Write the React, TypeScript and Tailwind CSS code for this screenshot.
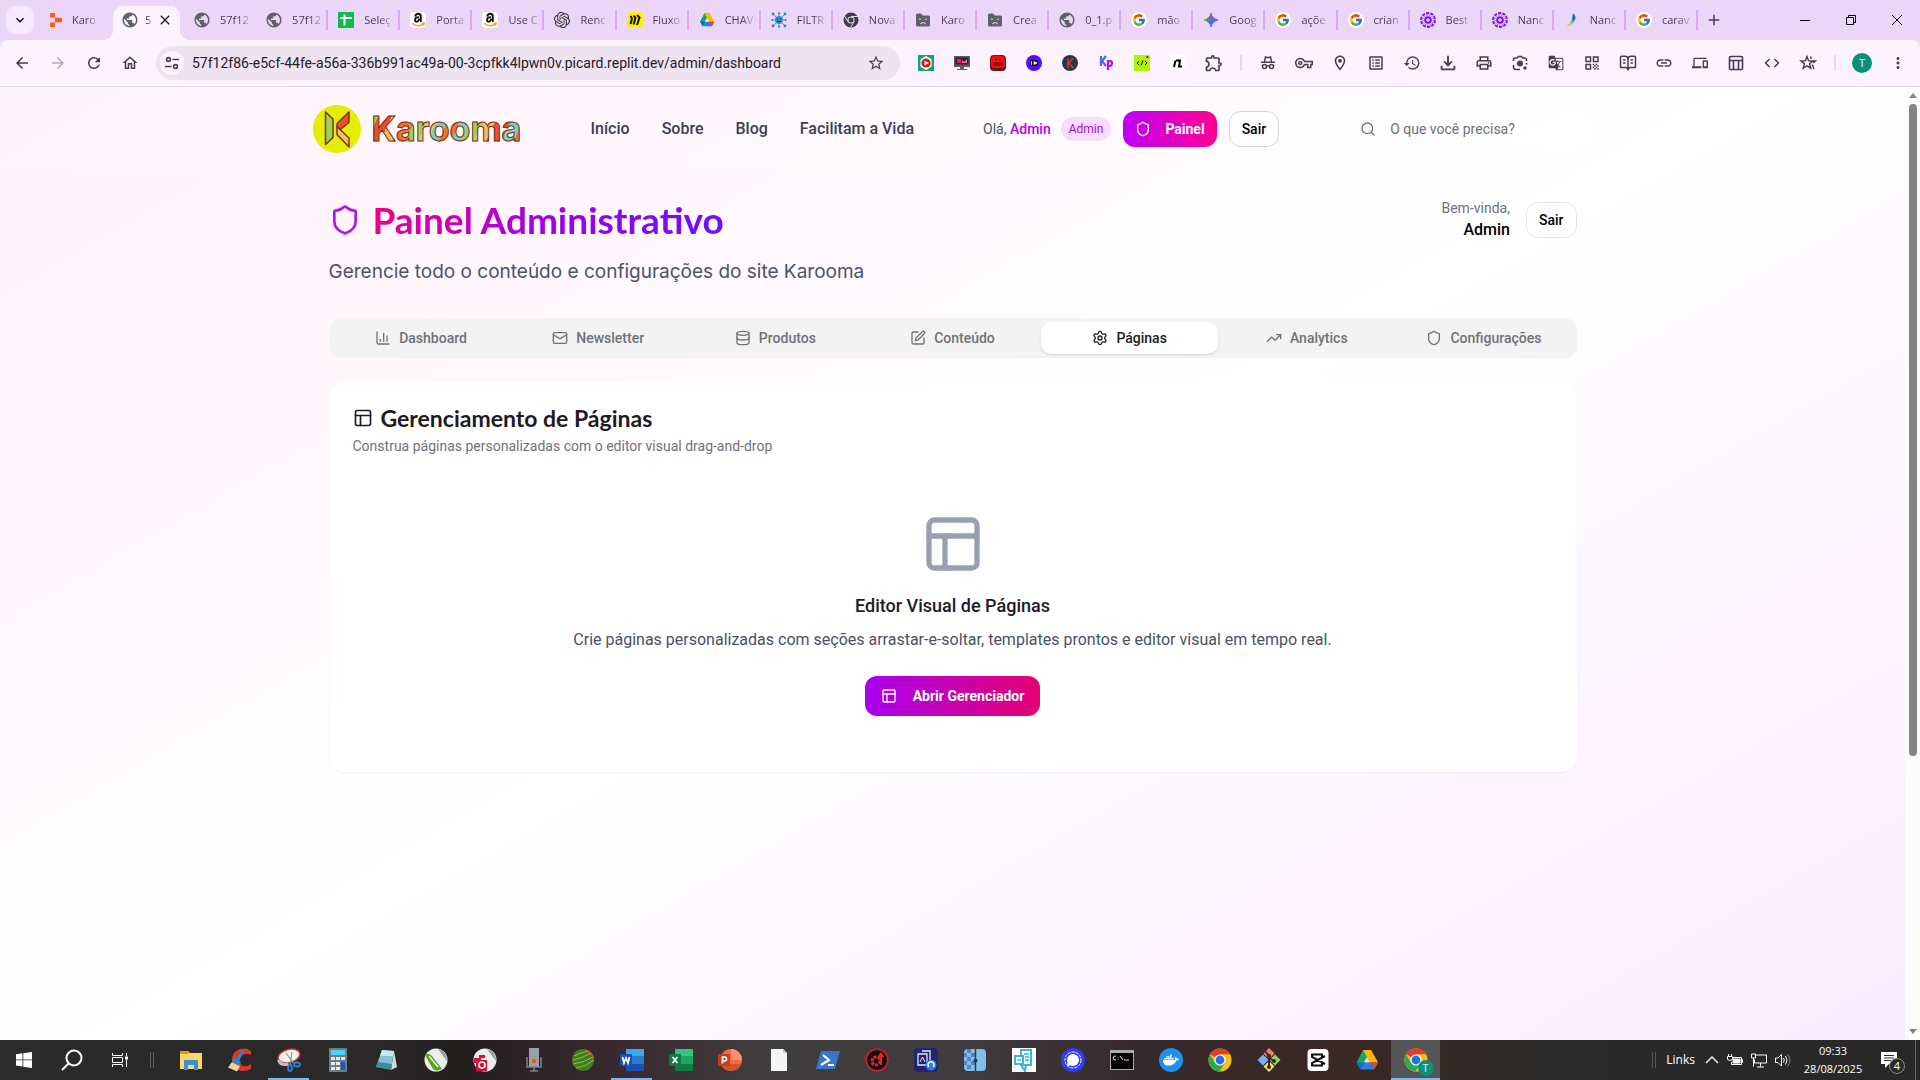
import React from 'react';
import type { ReactNode } from 'react';
import { ChartColumn, Mail, Database, SquarePen, Settings, TrendingUp, Shield, PanelsTopLeft, Search, BookOpenText } from 'lucide-react';
import {
  MdArrowBack, MdArrowForward, MdRefresh, MdOutlineHome, MdPublic, MdStarOutline, MdOutlineExtension,
  MdOutlineVpnKey, MdOutlineLocationOn, MdOutlineListAlt, MdHistory, MdOutlineFileDownload, MdOutlinePrint,
  MdGTranslate, MdQrCode, MdLink, MdDevices, MdCode, MdMoreVert, MdAdd,
  MdClose, MdKeyboardArrowDown,
} from 'react-icons/md';
import { FcGoogle } from 'react-icons/fc';
import { FaDocker } from 'react-icons/fa';
import { SiOpenai } from 'react-icons/si';

/* ---------- Favicons ---------- */

const Globe = () => <MdPublic className="size-[18px] text-[#5f6368]" />;

const Replit = () => (
  <svg viewBox="0 0 16 16" className="size-4 shrink-0">
    <path d="M2 1h5v4.600H3Q2 5.600 2 4.600ZM7 5.700h6q1 0 1 1v2.600q0 1-1 1H7ZM2 10.400h5V15H3q-1 0-1-1Z" fill="#ff5a12" />
  </svg>
);

const Sheets = () => (
  <svg viewBox="0 0 16 16" className="size-4">
    <rect width="16" height="16" rx="1" fill="#0cba52" />
    <path d="M6.500 2.500v11M2 6h12" stroke="#fff" strokeWidth="2" />
  </svg>
);

const Amazon = () => (
  <span className="flex size-4 items-center justify-center rounded-sm bg-white">
    <svg viewBox="0 0 16 16" className="size-4">
      <path d="M5.200 4.500Q5.600 1.800 8.200 1.800q2.600 0 2.600 2.600v3.800q0 .8.700 1.500M9 5.300Q5 5.300 5 7.700q0 1.900 1.800 1.900Q9 9.600 9 6.800" fill="none" stroke="#111" strokeWidth="1.900" />
      <path d="M2 11.500q6 4 11 .6M11.500 11.300l2.600-.2-.5 2.600" fill="none" stroke="#ff9f1a" strokeWidth="1.500" />
    </svg>
  </span>
);

const OpenAi = () => <SiOpenai className="size-4 text-[#333]" />;

const Miro = () => (
  <svg viewBox="0 0 16 16" className="size-4">
    <rect width="16" height="16" rx="4" fill="#fff000" />
    <path d="M3.500 4L5 6.500 3.500 12M6.500 3.500L8.500 6 6.500 12.500M10 3l2.500 2.500L10 13" stroke="#111" strokeWidth="2" fill="none" />
  </svg>
);

const Drive = ({ className = 'size-4' }: { className?: string }) => (
  <svg viewBox="0 0 24 24" className={className}>
    <path d="M8 2h8l-4 7-6.500 12.500L1.500 14.500Z" fill="#11a861" />
    <path d="M8 2h8l7 12.500h-8Z" fill="#ffba00" />
    <path d="M5.500 21.500l4-7H23l-4 7Z" fill="#2b7de9" />
    <path d="M1.500 14.500l4 7 4-7Z" fill="#1967d2" />
    <path d="M15.500 14.500H23l-3.500 6.500Z" fill="#ea4335" />
    <path d="M12 9l3.200 5.500H8.800Z" fill="#efe6f2" />
  </svg>
);

const Network = () => (
  <svg viewBox="0 0 16 16" className="size-4">
    <path d="M2 2l4 4M14 2l-4 4M2 14l4-4M14 14l-4-4M8 1v4M8 11v4M1 8h4M11 8h4" stroke="#4b94c7" />
    <circle cx="8" cy="8" r="4" fill="#2f8fd0" />
    <g fill="#3b7fb0">
      <circle cx="2" cy="2" r="1.400" /><circle cx="14" cy="2" r="1.400" /><circle cx="2" cy="14" r="1.400" /><circle cx="14" cy="14" r="1.400" />
      <circle cx="1.300" cy="8" r="1" /><circle cx="14.700" cy="8" r="1" /><circle cx="8" cy="1.200" r="1" /><circle cx="8" cy="14.800" r="1" />
    </g>
    <path d="M6 7h1M9 7h1M6 9.500h4" stroke="#083a5c" />
  </svg>
);

const ChromeGray = () => (
  <svg viewBox="0 0 16 16" className="size-4">
    <circle cx="8" cy="8" r="7.500" fill="#3c3f43" />
    <circle cx="8" cy="8" r="3.600" fill="#ecd6f8" />
    <circle cx="8" cy="8" r="2.500" fill="#3c3f43" />
    <path d="M8 4.500h7M5 9.800L1.600 4M11 9.800L7.500 15.500" stroke="#ecd6f8" />
  </svg>
);

const SadFolder = () => (
  <svg viewBox="0 0 16 16" className="size-4">
    <path d="M1 3q0-1.500 1.500-1.500H6L8 3.500h5.500Q15 3.500 15 5v8q0 1.500-1.500 1.500h-11Q1 14.500 1 13Z" fill="#5f6368" />
    <path d="M5 6.500v1.500M11 6.500v1.500M5.500 12q2.500-3 5 0" stroke="#ecd6f8" strokeWidth="1.200" fill="none" />
  </svg>
);

const Google = () => (
  <span className="flex size-4 items-center justify-center rounded-full bg-white"><FcGoogle className="size-3.5" /></span>
);

const Gemini = () => (
  <svg viewBox="0 0 16 16" className="size-4">
    <defs>
      <linearGradient id="gem" x1="0" y1="0.2" x2="1" y2="0.7">
        <stop offset="0" stopColor="#f2b705" /><stop offset="0.3" stopColor="#2fa866" /><stop offset="0.55" stopColor="#4c6df5" /><stop offset="1" stopColor="#6a5cf0" />
      </linearGradient>
    </defs>
    <path d="M8 1Q9 6.500 15 8 9 9.500 8 15 7 9.500 1 8 7 6.500 8 1Z" fill="url(#gem)" stroke="url(#gem)" />
    <path d="M8 .5Q8.500 4 9.500 5.500L8 6.500 6.500 5.500Q7.500 4 8 .5Z" fill="#ea4335" />
  </svg>
);

const PurpleGear = () => (
  <svg viewBox="0 0 16 16" className="size-4" fill="none" stroke="#7a12e8">
    <circle cx="8" cy="8" r="7" strokeWidth="1.800" strokeDasharray="3.200 1.200" />
    <circle cx="8" cy="8" r="2.800" strokeWidth="2" />
    <circle cx="8" cy="8" r="5.300" strokeWidth=".8" strokeDasharray="1.500 1" />
  </svg>
);

const Nano = () => (
  <svg viewBox="0 0 16 16" className="size-4">
    <path d="M9 1q5 5 0 10-3 3-6 3.500Q8 10 8 5.500Q8 3 9 1Z" fill="#27b9c9" />
    <path d="M9.500 1.500q3 3.500 1 7L8.500 8Q9.500 4 9.500 1.500Z" fill="#4f46c8" />
    <path d="M7 10l2.500 1Q6 14.500 3 14.500Z" fill="#c5d92d" />
  </svg>
);

/* ---------- Browser chrome ---------- */

const browserTabs: { icon: ReactNode; title: string }[] = [
  { icon: <Globe />, title: '57f12' },
  { icon: <Globe />, title: '57f12' },
  { icon: <Sheets />, title: 'Seleç' },
  { icon: <Amazon />, title: 'Porta' },
  { icon: <Amazon />, title: 'Use C' },
  { icon: <OpenAi />, title: 'Renc' },
  { icon: <Miro />, title: 'Fluxo' },
  { icon: <Drive />, title: 'CHAV' },
  { icon: <Network />, title: 'FILTR' },
  { icon: <ChromeGray />, title: 'Nova' },
  { icon: <SadFolder />, title: 'Karo' },
  { icon: <SadFolder />, title: 'Crea' },
  { icon: <Globe />, title: '0_1.p' },
  { icon: <Google />, title: 'mão' },
  { icon: <Gemini />, title: 'Goog' },
  { icon: <Google />, title: 'açõe' },
  { icon: <Google />, title: 'crian' },
  { icon: <PurpleGear />, title: 'Best' },
  { icon: <PurpleGear />, title: 'Nanc' },
  { icon: <Nano />, title: 'Nanc' },
  { icon: <Google />, title: 'carav' },
];

const fade = 'whitespace-nowrap text-[11px] [mask-image:linear-gradient(to_right,#000_60%,rgba(0,0,0,0.25))]';

function TabStrip() {
  return (
    <div className="flex h-10 items-stretch bg-[#ecd6f8] text-xs text-[#4b3a55]">
      <div className="flex w-[46px] items-center pl-1.5">
        <button aria-label="Pesquisar guias" className="flex h-7 w-7 items-center justify-center rounded-[10px] bg-[#f8e8ff] text-black">
          <MdKeyboardArrowDown className="size-4" />
        </button>
      </div>
      <button className="flex w-[67px] items-center gap-2 pl-0.5 text-left">
        <Replit />
        <span className={fade}>Karo</span>
      </button>
      <div className="relative mt-1.5 flex w-[67px] items-center rounded-t-[10px] bg-[#fdf3ff] pb-1.5 pl-2">
        <span className="absolute bottom-0 -left-2.5 size-2.5 bg-[radial-gradient(circle_at_0_0,transparent_10px,#fdf3ff_10px)]" />
        <span className="absolute -right-2.5 bottom-0 size-2.5 bg-[radial-gradient(circle_at_100%_0,transparent_10px,#fdf3ff_10px)]" />
        <Globe />
        <span className={`ml-1.5 ${fade}`}>5</span>
        <button aria-label="Fechar guia" className="ml-1.5 text-[#1f1a24]"><MdClose className="size-4" /></button>
      </div>
      <div className="flex max-w-[1518px] flex-1 pl-1">
        {browserTabs.map((t, i) => (
          <button key={i} className="flex min-w-0 flex-1 items-center pl-2 text-left">
            <span className="flex w-5 justify-center">{t.icon}</span>
            <span className={`ml-2 ${fade}`}>{t.title}</span>
            {i > 0 && <span className="ml-auto h-5 w-0.5 bg-[#dba6fb]" />}
          </button>
        ))}
      </div>
      <button aria-label="Nova guia" className="flex w-8 items-center justify-center"><MdAdd className="size-[18px]" /></button>
      <div className="ml-auto flex text-black">
        <button aria-label="Minimizar" className="flex w-[46px] items-center justify-center"><span className="h-px w-2.5 bg-black" /></button>
        <button aria-label="Restaurar" className="flex w-[46px] items-center justify-center">
          <svg viewBox="0 0 10 10" className="size-2.5" fill="none" stroke="currentColor"><path d="M.5 2.500h7v7h-7zM2.500 2.500v-2h7v7h-2" /></svg>
        </button>
        <button aria-label="Fechar" className="flex w-[46px] items-center justify-center">
          <svg viewBox="0 0 10 10" className="size-2.5" stroke="currentColor"><path d="M0 0l10 10M10 0L0 10" /></svg>
        </button>
      </div>
    </div>
  );
}

const ExtRecord = () => (
  <svg viewBox="0 0 16 16" className="size-4"><rect width="16" height="16" fill="#12a37c" /><path d="M8 1l5.500 3.200v7.600L8 15l-5.500-3.200V4.200Z" fill="#fff" /><circle cx="8" cy="8" r="4.600" fill="#e5131d" /><path d="M6.500 5.500v5L11 8Z" fill="#fff" /></svg>
);
const ExtMonitor = () => (
  <svg viewBox="0 0 16 16" className="size-4"><rect y="1" width="16" height="11" fill="#5d5767" /><rect x="1.500" y="2.500" width="13" height="7" fill="#2b2333" /><path d="M3 4h4v4H3z" fill="#e61e62" /><path d="M8 8V5l2 2 3-3v4Z" fill="#f16b97" /><path d="M6 12h4v2h3v1H3v-1h3z" fill="#5d6170" /></svg>
);
const ExtRed = () => (
  <svg viewBox="0 0 16 16" className="size-4"><rect width="16" height="16" rx="4" fill="#6d1714" /><rect x="1" y="1" width="14" height="12" rx="3" fill="#f20f0f" /><path d="M5 4.500h2M9 4.500h2M3 8h10M3 10h10" stroke="#5a0808" /></svg>
);
const ExtPurple = () => (
  <svg viewBox="0 0 16 16" className="size-4"><circle cx="8" cy="8" r="8" fill="#5a0bff" /><rect x="4" y="5" width="8" height="6" rx="1" fill="#0b0620" /><path d="M5.500 6v4M8 6.500l3 1.500-3 1.500Z" stroke="#fff" fill="#fff" strokeWidth=".8" /></svg>
);
const ExtK = () => (
  <svg viewBox="0 0 16 16" className="size-4"><circle cx="8" cy="8" r="8" fill="#2c3446" /><path d="M6 3v10M11 3L7 8l4 5" stroke="#e03535" strokeWidth="1.500" fill="none" /></svg>
);
const ExtKp = () => (
  <svg viewBox="0 0 16 16" className="size-4" fill="none" strokeWidth="2.200"><path d="M3 1v10M8 1L4 6l4 5" stroke="#3d6bf2" /><path d="M10 5v10M10 6.500q4.500-1.500 4 2t-4 2" stroke="#b414e8" /></svg>
);
const ExtCode = () => (
  <svg viewBox="0 0 16 16" className="size-4"><rect width="16" height="16" fill="#aef500" /><path d="M5 6L3 8l2 2M11 6l2 2-2 2M9 5.500l-2 5" stroke="#111" fill="none" /><circle cx="13.500" cy="2" r="1" fill="#111" /></svg>
);
const ExtN = () => (
  <svg viewBox="0 0 16 16" className="size-4"><rect width="16" height="16" rx="3" fill="#fff" /><path d="M4 12l1.500-6.500M6 5.500h4L9 11.500h3" stroke="#000" strokeWidth="2" fill="none" /></svg>
);
const Incognito = () => (
  <svg viewBox="0 0 18 18" className="size-[18px]" fill="none" stroke="currentColor" strokeWidth="1.500"><path d="M5.500 7.500L6.500 3l2.500.8 2.500-.8 1 4.500M2 8.200h14" /><circle cx="5.500" cy="12.500" r="2" /><circle cx="12.500" cy="12.500" r="2" /><path d="M7.500 12.200q1.500-1 3 0" /></svg>
);
const Lens = () => (
  <svg viewBox="0 0 18 18" className="size-[18px]" fill="none" stroke="currentColor" strokeWidth="1.600"><path d="M2.500 7V6q0-2 2-2h1.700L7.500 2.500h3L11.800 4h1.700q2 0 2 2v1M2.500 11v2q0 2.500 2.500 2.500h4M15.500 9v1.500" /><circle cx="9" cy="9.500" r="2.200" fill="currentColor" /><circle cx="14" cy="14" r="1" fill="currentColor" /></svg>
);
const StarSpark = () => (
  <svg viewBox="0 0 18 18" className="size-[18px]" fill="none" stroke="currentColor" strokeWidth="1.400"><path d="M8 2.500l1.600 4.200 4.500.2-3.500 2.900 1.200 4.400L8 11.800l-3.800 2.400 1.200-4.400L1.900 6.900l4.500-.2ZM11.500 2.500l.9 2.500M13.300 10.500l1.700 4.500M14 6.900h2.500l-2.300 2" /></svg>
);
const SideLayout = () => (
  <svg viewBox="0 0 18 18" className="size-[18px]" fill="none" stroke="currentColor" strokeWidth="1.600"><rect x="2.500" y="2.500" width="13" height="13" rx="1" /><path d="M2.500 6.500h13M6.500 6.500v9M11.500 6.500v9" /></svg>
);
const Tune = () => (
  <svg viewBox="0 0 16 16" className="size-4" fill="none" stroke="currentColor" strokeWidth="1.600"><circle cx="4.500" cy="4.500" r="1.900" /><path d="M8.500 4.500H15M1 11.500h6.500" /><circle cx="11.500" cy="11.500" r="1.900" /></svg>
);

const mono = 'size-[18px]';
const extensions: [string, ReactNode][] = [
  ['Gravador', <ExtRecord />], ['Monitor', <ExtMonitor />], ['Vídeo', <ExtRed />], ['IQ', <ExtPurple />], ['K', <ExtK />],
  ['Kp', <ExtKp />], ['Código', <ExtCode />], ['Notas', <ExtN />], ['Extensões', <MdOutlineExtension className="size-5" />],
];
const tools: [string, ReactNode][] = [
  ['Anônima', <Incognito />], ['Senhas', <MdOutlineVpnKey className={mono} />], ['Endereços', <MdOutlineLocationOn className={mono} />],
  ['Lista', <MdOutlineListAlt className={mono} />], ['Histórico', <MdHistory className={mono} />], ['Downloads', <MdOutlineFileDownload className="size-[22px]" />],
  ['Imprimir', <MdOutlinePrint className={mono} />], ['Lens', <Lens />], ['Traduzir', <MdGTranslate className="size-4" />],
  ['QR Code', <MdQrCode className={mono} />], ['Leitura', <BookOpenText className={mono} />], ['Copiar link', <MdLink className={mono} />],
  ['Dispositivos', <MdDevices className="size-4" />], ['Painel lateral', <SideLayout />], ['Ferramentas', <MdCode className={mono} />],
  ['Favoritos', <StarSpark />],
];

const IconButton = ({ label, children }: { label: string; children: ReactNode }) => (
  <button aria-label={label} className="flex h-8 w-9 shrink-0 items-center justify-center">{children}</button>
);

function Toolbar() {
  return (
    <div className="bg-[#ecd6f8]">
      <div className="flex h-[47px] items-center rounded-t-lg border-b border-[#e8d8ee] bg-[#fdf3ff] pl-1 text-[#4a3a52]">
        <IconButton label="Voltar"><MdArrowBack className={mono} /></IconButton>
        <span className="flex text-[#b5a8ba]"><IconButton label="Avançar"><MdArrowForward className={mono} /></IconButton></span>
        <IconButton label="Recarregar"><MdRefresh className={mono} /></IconButton>
        <IconButton label="Página inicial"><MdOutlineHome className={mono} /></IconButton>
        <div className="ml-2 flex h-[34px] min-w-0 flex-1 items-center rounded-full bg-[#eee3f0] pr-2 pl-1">
          <button aria-label="Informações do site" className="flex size-6 shrink-0 items-center justify-center rounded-full bg-[#fdf3ff]"><Tune /></button>
          <input
            aria-label="Endereço"
            className="ml-2 min-w-0 flex-1 bg-transparent font-[Roboto] text-sm text-[#231a29] outline-none"
            defaultValue="57f12f86-e5cf-44fe-a56a-336b991ac49a-00-3cpfkk4lpwn0v.picard.replit.dev/admin/dashboard"
          />
          <button aria-label="Adicionar aos favoritos" className="flex w-8 justify-center"><MdStarOutline className={mono} /></button>
        </div>
        <div className="ml-2 flex">
          {extensions.map(([l, i]) => <IconButton key={l} label={l}>{i}</IconButton>)}
        </div>
        <span className="mx-2 h-4 w-0.5 bg-[#ecd6f8]" />
        <div className="flex">
          {tools.map(([l, i]) => <IconButton key={l} label={l}>{i}</IconButton>)}
        </div>
        <span className="mx-2 h-4 w-0.5 bg-[#ecd6f8]" />
        <button aria-label="Perfil" className="flex h-8 w-9 items-center justify-center">
          <span className="flex size-5 items-center justify-center rounded-full bg-[#07907c] text-[11px] text-white">T</span>
        </button>
        <button aria-label="Menu" className="mr-1 flex h-8 w-9 items-center justify-center"><MdMoreVert className={mono} /></button>
      </div>
    </div>
  );
}

/* ---------- Site ---------- */

function LogoMark() {
  return (
    <svg viewBox="0 0 48 48" className="size-12 shrink-0" stroke="#7b3324" strokeWidth="1.500" strokeLinejoin="round">
      <circle cx="24" cy="24" r="24" fill="#e3ee00" stroke="none" />
      <path d="M12.500 7l7.500 7v18.500l-7.500 7Z" fill="#9bd35a" />
      <path d="M24 18.500L36 7v10.500L25.500 26 24 23Z" fill="#e8512c" />
      <path d="M24 21.500l12 11.500v9L24 29.500Z" fill="#f3c260" />
    </svg>
  );
}

const menu = ['Início', 'Sobre', 'Blog', 'Facilitam a Vida'];

function SiteHeader() {
  return (
    <header className="bg-white/20">
      <div className="mx-auto flex h-[83px] max-w-7xl items-center">
        <a href="#inicio" aria-label="Karooma" className="flex w-[278px] items-center gap-[11px]">
          <LogoMark />
          <span className="bg-[linear-gradient(115deg,#9bd35a_0_8px,#e8512c_8px_20px,#f3c260_20px_31px,#ee7434_31px_43px,#9bd35a_43px_54px,#f3c260_54px_63px,#7fd0c0_63px_73px,#ee7434_73px_84px,#7fd0c0_84px_93px,#9bd35a_93px_105px,#f3c260_105px_116px,#e8512c_116px_130px,#7fd0c0_130px_141px,#ee7434_141px)] bg-clip-text font-[Inter] text-[34px] leading-9 font-bold text-transparent [-webkit-text-stroke:1px_#7b3324]">
            Karooma
          </span>
        </a>
        <nav className="flex gap-8 text-base font-medium text-[#374151]">
          {menu.map((m) => <a key={m} href="#menu">{m}</a>)}
        </nav>
        <div className="ml-[69px] flex items-center gap-3 text-sm">
          <span className="flex items-center gap-2.5 text-[#4b5563]">
            <span>Olá, <strong className="font-medium text-[#b800e6]">Admin</strong></span>
            <span className="rounded-full bg-[#f5defd] px-2 py-1 text-xs leading-4 text-[#a10bd0]">Admin</span>
          </span>
          <button className="flex h-9 items-center gap-3.5 rounded-xl bg-linear-to-r/srgb from-[#bf00f5] to-[#ff0090] px-3 font-bold text-white">
            <Shield className="size-4" />
            Painel
          </button>
          <button className="h-9 rounded-xl border border-[#d1d5db] bg-white px-3 font-medium text-black">Sair</button>
        </div>
        <label className="ml-[71px] flex h-10 min-w-0 flex-1 items-center gap-3.5 rounded-full bg-white/50 px-2.5 text-[#6b7280]">
          <Search className="size-4 shrink-0" />
          <input type="search" aria-label="Buscar" placeholder="O que você precisa?" className="w-full min-w-0 bg-transparent text-sm outline-none placeholder:text-[#6b7280]" />
        </label>
      </div>
    </header>
  );
}

const adminTabs = [
  { label: 'Dashboard', Icon: ChartColumn },
  { label: 'Newsletter', Icon: Mail },
  { label: 'Produtos', Icon: Database },
  { label: 'Conteúdo', Icon: SquarePen },
  { label: 'Páginas', Icon: Settings },
  { label: 'Analytics', Icon: TrendingUp },
  { label: 'Configurações', Icon: Shield },
];

function AdminPage() {
  return (
    <main className="mx-auto max-w-7xl px-4 pt-7">
      <div className="flex items-start justify-between">
        <div>
          <h1 className="flex items-center gap-3 text-[37px] leading-[44px] font-bold">
            <Shield className="size-8 text-[#b112f0]" />
            <span className="bg-linear-to-r/srgb from-[#ee0088] via-[#a000e8] to-[#6a10ff] bg-clip-text font-[Lato] text-transparent">Painel Administrativo</span>
          </h1>
          <p className="mt-4 font-[Inter] text-[19px] leading-7 text-[#475569]">Gerencie todo o conteúdo e configurações do site Karooma</p>
        </div>
        <div className="flex items-center gap-4">
          <div className="text-right">
            <p className="text-sm leading-5 text-[#6b7280]">Bem-vinda,</p>
            <p className="text-base leading-6 font-medium text-black">Admin</p>
          </div>
          <button className="h-9 rounded-xl border border-[#e3e3e8] bg-white px-3 text-sm font-medium text-black">Sair</button>
        </div>
      </div>

      <div role="tablist" className="mt-8 grid h-10 grid-cols-7 rounded-xl bg-[#f3f3f3] p-1 text-sm font-medium text-[#71717a]">
        {adminTabs.map(({ label, Icon }) => (
          <button
            key={label}
            role="tab"
            aria-selected={label === 'Páginas'}
            className="flex items-center justify-center gap-2 rounded-[10px] aria-selected:bg-white aria-selected:text-[#1c1c24] aria-selected:shadow-sm"
          >
            <Icon className="size-4" />
            {label}
          </button>
        ))}
      </div>

      <section className="mt-6 rounded-2xl bg-white shadow-xs">
        <div className="px-6 pt-6">
          <h2 className="flex items-center gap-2 text-[23px] leading-6 text-[#1e1b26]">
            <PanelsTopLeft className="size-5" />
            <span className="font-[Lato] font-bold">Gerenciamento de Páginas</span>
          </h2>
          <p className="mt-1.5 text-sm leading-5 text-[#71717a]">Construa páginas personalizadas com o editor visual drag-and-drop</p>
        </div>
        <div className="flex flex-col items-center px-6 pt-14 pb-14">
          <PanelsTopLeft className="size-16 text-[#9b9fb2]" />
          <h3 className="mt-4 text-lg leading-7 font-medium text-[#1e1b26]">Editor Visual de Páginas</h3>
          <p className="mt-2 text-base leading-6 text-[#4b5166]">Crie páginas personalizadas com seções arrastar-e-soltar, templates prontos e editor visual em tempo real.</p>
          <button className="mt-6 flex h-10 items-center gap-4 rounded-xl bg-linear-to-r/srgb from-[#a800f0] to-[#e60073] px-4 text-sm font-bold text-white">
            <PanelsTopLeft className="size-4" />
            Abrir Gerenciador
          </button>
        </div>
      </section>
    </main>
  );
}

function ScrollBar() {
  return (
    <div aria-hidden="true" className="flex w-[15px] flex-col items-center bg-[#fcfcfc] py-1.5">
      <span className="border-x-4 border-b-[5px] border-x-transparent border-b-[#858585]" />
      <span className="mt-1.5 w-2 flex-[648] rounded-full bg-[#858585]" />
      <span className="flex-[272]" />
      <span className="border-x-4 border-t-[5px] border-x-transparent border-t-[#858585]" />
    </div>
  );
}

/* ---------- Taskbar ---------- */

const Svg = ({ children, box = '0 0 24 24' }: { children: ReactNode; box?: string }) => (
  <svg viewBox={box} className="size-6">{children}</svg>
);

const OfficeIcon = ({ dark, mid, light, mark }: { dark: string; mid: string; light: string; mark: ReactNode }) => (
  <Svg>
    <rect x="6" y="1" width="18" height="22" rx="1.500" fill={mid} />
    <rect x="6" y="1" width="18" height="7" fill={light} />
    <rect x="6" y="16" width="18" height="7" fill={dark} />
    <rect y="6" width="12" height="12" rx="1" fill={dark} />
    <g stroke="#fff" strokeWidth="1.700" fill="none">{mark}</g>
  </Svg>
);

const ChromeIcon = () => (
  <Svg>
    <circle cx="12" cy="12" r="11.500" fill="#fbc116" />
    <path d="M12 12L2 6.300A11.500 11.500 0 0 1 22 6.300L12 6.300Z" fill="#e33b2e" />
    <path d="M2 6.300A11.500 11.500 0 0 0 11.500 23.500L17 14.500 12 12 7 14.500Z" fill="#2da94f" />
    <circle cx="12" cy="12" r="5.600" fill="#fff" /><circle cx="12" cy="12" r="4.400" fill="#1a73e8" />
  </Svg>
);

const apps: { name: string; icon: ReactNode; open?: boolean; active?: boolean }[] = [
  { name: 'Explorador de Arquivos', icon: <Svg><path d="M1 3h8l2 2h12v16H1Z" fill="#ffd766" /><path d="M1 3h8l1 3H1Z" fill="#d99a13" /><path d="M5 12h14v10h-4v-5H9v5H5Z" fill="#3a8fdb" /></Svg> },
  { name: 'CCleaner', icon: <Svg><path d="M23 7V3Q18-.5 12 1 5 3 4 11q0 8 6 11 6 2.500 13-1v-5q-5 3.500-9 1.500-3-2-2.500-6T16 6.500q3.500-1 7 .5Z" fill="#d8392b" /><path d="M14 2l2 1-5 10-3-2Z" fill="#2f84c9" /><path d="M4 14l8 4-3 5.500-9-4Z" fill="#f5cf9d" /><path d="M6 10l7 4-1.500 4L4 14Z" fill="#2f84c9" /></Svg> },
  { name: 'Captura', open: true, icon: <Svg><ellipse cx="12" cy="8" rx="11" ry="6.500" fill="#f4f4f4" stroke="#d33" strokeWidth="1.500" transform="rotate(-15 12 8)" /><path d="M1.500 12q2 6 10 4" stroke="#b9c2c9" strokeWidth="3" fill="none" /><path d="M9 5l8 11M15 4l-2 13" stroke="#8a939c" strokeWidth="1.200" /><ellipse cx="13" cy="20" rx="2" ry="3" fill="none" stroke="#1e88d6" strokeWidth="1.800" /><ellipse cx="20" cy="16.500" rx="3" ry="2" fill="none" stroke="#1e88d6" strokeWidth="1.800" /></Svg> },
  { name: 'Calculadora', icon: <Svg><rect x="3" width="18" height="24" rx="1" fill="#717b88" /><rect x="5" y="2" width="14" height="5" fill="#45d3f7" /><path d="M5 9h4v3H5zM10 9h4v3h-4zM15 9h4v3h-4zM5 14h4v3H5zM10 14h4v3h-4zM5 19h4v3H5zM10 19h4v3h-4z" fill="#e5e9ee" /><rect x="15" y="14" width="4" height="8" fill="#0e5fb5" /></Svg> },
  { name: 'Bloco de Notas', icon: <Svg><path d="M7 2l12 1-3 18L1 19Z" fill="#7cc4d6" /><path d="M7 2l12 1-1 5L5 8Z" fill="#c9e8ee" /><path d="M19 3l3 16-6 3Z" fill="#d7d9da" /><path d="M3 14l14 2-1 6L1 19Z" fill="#3a8c9e" /></Svg> },
  { name: 'CorelDRAW', icon: <Svg><circle cx="12" cy="12" r="11.500" fill="#eceeed" /><path d="M14 1q9 2 9 12Q19 8 14 1Z" fill="#9aa0a0" /><path d="M1 7q3-3 7 1l10 13q-6 3-9 0Z" fill="#58a516" /><path d="M5 8l9 11" stroke="#fff" strokeWidth="1.300" /></Svg> },
  { name: 'Corel PHOTO-PAINT', icon: <Svg><circle cx="12" cy="12" r="11.500" fill="#eceeed" /><path d="M14 1q9 2 9 12Q19 8 14 1Z" fill="#9aa0a0" /><path d="M1 10h5V7h6v3h-4v2h6v11H3v-8H1Z" fill="#d1123a" /><circle cx="9" cy="17" r="3" fill="#d1123a" stroke="#fff" strokeWidth="1.500" /></Svg> },
  { name: 'Gravador de Voz', icon: <Svg><rect x="7" width="10" height="19" fill="#98a0aa" /><path d="M5 9v10h14V9M12 19v4M8 23h8" fill="none" stroke="#79818b" strokeWidth="1.600" /><circle cx="12" cy="13" r="2.300" fill="#f0541e" /></Svg> },
  { name: 'Globo', icon: <Svg><circle cx="12" cy="12" r="11" fill="#3f7d1e" /><path d="M13 1q10 2 10 11Q19 5 13 1Z" fill="#d8442a" /><path d="M3 8q9-4 14-5M2 12q10-2 18-7M2 16q10-1 20-7M5 20q9-1 18-8" stroke="#8fbd4e" fill="none" /></Svg> },
  { name: 'Word', open: true, icon: <OfficeIcon dark="#1b4fb0" mid="#2b7cd3" light="#41a5ee" mark={<path d="M2.500 9l1.500 6 2-5 2 5 1.500-6" />} /> },
  { name: 'Excel', icon: <OfficeIcon dark="#107c41" mid="#21a366" light="#33c481" mark={<path d="M3.500 9l5 6M8.500 9l-5 6" />} /> },
  { name: 'PowerPoint', icon: <Svg><circle cx="13" cy="12" r="11" fill="#ed6c47" /><path d="M13 1a11 11 0 0 1 11 11H13Z" fill="#ff8f6b" /><path d="M3 16a11 11 0 0 0 20 0Z" fill="#d35230" /><rect y="6" width="12" height="12" rx="1" fill="#c43e1c" /><path d="M4.500 15.500V9h2q2 0 2 2t-2 2h-2" stroke="#fff" strokeWidth="1.600" fill="none" /></Svg> },
  { name: 'Documento', icon: <Svg><path d="M4 1h12l4 4v18H4Z" fill="#f4f4f4" /><path d="M16 1v4h4" fill="#c9c9c9" /></Svg> },
  { name: 'PowerShell', icon: <Svg><path d="M5 3h19l-5 18H0Z" fill="#3975cf" /><path d="M7 7l6 5-8 5M12 17h6" stroke="#fff" strokeWidth="2.200" fill="none" /></Svg> },
  { name: 'Driver', icon: <Svg><circle cx="12" cy="12" r="10.800" fill="#111" stroke="#d81e2a" strokeWidth="1.500" /><circle cx="11" cy="13" r="4" fill="none" stroke="#e52520" strokeWidth="3" strokeDasharray="3 1" /><path d="M16 17V7M13.500 9L16 5.500 18.500 9" stroke="#e52520" strokeWidth="2" fill="none" /></Svg> },
  { name: 'Backup', icon: <Svg><rect width="24" height="24" rx="4" fill="#25246e" /><path d="M8 3h8v10M4 6h9v11H4z" stroke="#dfe4ff" fill="none" strokeWidth="1.300" /><path d="M6 14l2.500-5 2.500 5" stroke="#dfe4ff" fill="none" /><circle cx="17" cy="17" r="5.500" fill="#2a7be4" /><path d="M15 19a3 3 0 1 1 4 0" stroke="#fff" fill="none" strokeWidth="1.500" /></Svg> },
  { name: 'Compactador', icon: <Svg><rect x="1" y="1" width="22" height="22" rx="4" fill="#82bdf0" /><path d="M1 5h3v4H1zM4 9h4v4H4zM8 5h4v4H8zM1 13h3v4H1zM8 13h4v4H8zM4 17h4v4H4zM4 1h4v4H4z" fill="#4f86bd" /><path d="M12.500 1v22" stroke="#1e3c5b" strokeWidth="1.500" /><circle cx="12.500" cy="12.500" r="2" fill="#1e3c5b" /></Svg> },
  { name: 'Leitor', icon: <Svg><rect width="24" height="24" fill="#fff" /><path d="M9 7V2h10v15h-6M3 8h8v8H3zM9 17h5l-1 6Z" fill="none" stroke="#3cb3e5" strokeWidth="2" /><path d="M12 6h5M13 9h4M13 12h4M5 12h4" stroke="#3cb3e5" strokeWidth="1.500" /></Svg> },
  { name: 'Signal', icon: <Svg><circle cx="12" cy="12" r="12" fill="#2f3cf2" /><circle cx="12" cy="12" r="8" fill="none" stroke="#fff" strokeDasharray="3 1" /><circle cx="12" cy="12" r="6" fill="#fff" /><path d="M6 18l1-5 4 4Z" fill="#fff" /></Svg> },
  { name: 'Prompt de Comando', icon: <Svg><rect y="2" width="24" height="20" fill="#a8adb2" /><rect x="1" y="5" width="22" height="16" fill="#050505" /><path d="M6 8q-3 0-3 2t3 2M8 9v.5M8 11v.5M10 8l3 4M14 12h5" stroke="#ddd" fill="none" /></Svg> },
  { name: 'Docker', icon: <span className="flex size-6 items-center justify-center rounded-full bg-[#1f90ee] text-white"><FaDocker className="size-4" /></span> },
  { name: 'Chrome', icon: <ChromeIcon /> },
  { name: 'Git', icon: <Svg><path d="M12 0l5.500 5.500L12 11 6.500 5.500Z" fill="#f1806c" /><path d="M6 6.500L11.500 12 6 17.500.5 12Z" fill="#7caef0" /><path d="M18 6.500l5.500 5.500-5.500 5.500-5.500-5.500Z" fill="#8fd16b" /><path d="M12 13l5.500 5.500L12 24l-5.500-5.500Z" fill="#f5dd66" /><path d="M8 3l4 5v12M12 10l5 3" stroke="#3a2a25" strokeWidth="2" fill="none" /><circle cx="12" cy="8" r="2" fill="#3a2a25" /><circle cx="12" cy="19" r="2" fill="#3a2a25" /><circle cx="17" cy="13" r="2" fill="#3a2a25" /></Svg> },
  { name: 'CapCut', icon: <Svg><rect x="1.500" y="1" width="21" height="22" rx="4" fill="#fff" /><path d="M19 8L6 15v2.500h10V15M19 16L6 9V6.500h10V9" stroke="#111" strokeWidth="2" fill="none" /></Svg> },
  { name: 'Google Drive', icon: <Drive className="size-6" /> },
  { name: 'Karooma - Chrome', open: true, active: true, icon: <span className="relative"><ChromeIcon /><span className="absolute -right-1.5 -bottom-1 flex size-4 items-center justify-center rounded-full bg-[#07907c] text-[10px] text-white">T</span></span> },
];

function Taskbar() {
  return (
    <footer className="flex h-10 shrink-0 items-stretch bg-[linear-gradient(to_right,#2b2b2b_0,#2a2828_20%,#231f1f_24%,#3a2b30_33%,#403e3e_40%,#403c3d_50%,#35282c_60%,#3b2823_70%,#2a2928_80%,#282828_100%)] text-white">
      <button aria-label="Iniciar" className="flex w-12 items-center justify-center">
        <svg viewBox="0 0 16 16" className="size-4" fill="#fff"><path d="M0 2.200L6.500 1.300v6.200H0zM7.300 1.200L16 0v7.500H7.300zM0 8.300h6.500v6.200L0 13.600zM7.300 8.300H16v7.600l-8.700-1.200z" /></svg>
      </button>
      <button aria-label="Pesquisar" className="flex w-12 items-center justify-center">
        <svg viewBox="0 0 22 22" className="size-[22px]" fill="none" stroke="#fff" strokeWidth="2"><circle cx="13" cy="9" r="7.500" /><path d="M7.500 14.500L1 21" /></svg>
      </button>
      <button aria-label="Visão de tarefas" className="flex w-12 items-center justify-center">
        <svg viewBox="0 0 16 16" className="size-4" fill="none" stroke="#fff"><path d="M.5 1v2.500h10V1M.5 15v-2.500h10V15M.5 5.500h10v5H.5zM14.500 1v3M14.500 8v7" /><rect x="13.500" y="5" width="2" height="2" fill="#fff" /></svg>
      </button>
      <span className="my-3 ml-1.5 w-1 border-x border-[#5a5a5a]" />
      <div className="ml-3 flex">
        {apps.map((a) => (
          <button
            key={a.name}
            aria-label={a.name}
            data-active={a.active}
            className="relative flex w-[49px] items-center justify-center data-[active=true]:bg-[#555]"
          >
            {a.icon}
            {a.open && <span data-active={a.active} className="absolute inset-x-1 bottom-0 h-0.5 bg-[#76b9ed] data-[active=true]:inset-x-0" />}
          </button>
        ))}
      </div>
      <div className="ml-auto flex items-center text-[11px]">
        <span className="mr-2.5 h-4 w-1 border-x border-[#5a5a5a]" />
        <span className="text-xs">Links</span>
        <button aria-label="Ícones ocultos" className="ml-2 flex w-[18px] justify-center">
          <svg viewBox="0 0 14 8" className="h-2 w-3.5" fill="none" stroke="#fff" strokeWidth="1.400"><path d="M1 7l6-6 6 6" /></svg>
        </button>
        <span className="ml-0.5 flex w-6 justify-center"><svg viewBox="0 0 16 14" className="h-3.5 w-4" fill="none" stroke="#fff"><path d="M5 4.500h9.500v7H4.500V9M14.500 6.500h1v3h-1M.5 3.500h5v3q-2.500 2-5 0zM1.500 3.500V1M4.500 3.500V1" /><path d="M6 6h7v4H6z" fill="#fff" /></svg></span>
        <span className="flex w-6 justify-center"><svg viewBox="0 0 16 15" className="h-4 w-4" fill="none" stroke="#fff"><path d="M4.500 2.500h11v8H3.500V7M9.500 10.500V14M6 14.500h7M.5 1.500h4v4h-4zM2.500 5.500V14" /></svg></span>
        <span className="flex w-6 justify-center"><svg viewBox="0 0 16 14" className="h-3.5 w-4" fill="none" stroke="#fff"><path d="M.5 5v4.500H3L6.500 13V1.500L3 5zM8.500 5q1.500 2 0 4.500M10.500 3q3 4 0 8.500" /><path d="M12.500 1q5 6 0 12.500" stroke="#888" /></svg></span>
        <div className="mx-1.5 flex w-16 flex-col items-center leading-[18px]">
          <time>09:33</time>
          <time>28/08/2025</time>
        </div>
        <button aria-label="4 notificações" className="relative flex w-9 justify-center">
          <svg viewBox="0 0 16 16" className="size-4"><path d="M0 0h16v12H8l-4 4v-4H0z" fill="#fff" /><path d="M3 3.500h10M3 6h10M3 8.500h7" stroke="#2b2b2b" /></svg>
          <span className="absolute top-1.5 right-0.5 flex size-4 items-center justify-center rounded-full border border-[#8a8a8a] bg-[#2b2b2b] text-[11px]">4</span>
        </button>
        <span className="ml-2 h-10 w-px bg-[#6a6a6a]" />
        <span className="w-1" />
      </div>
    </footer>
  );
}

export default function App() {
  return (
    <div className="flex min-h-screen flex-col font-['Open_Sans',sans-serif]">
      <TabStrip />
      <Toolbar />
      <div className="flex flex-1">
        <div className="min-w-0 flex-1 bg-[linear-gradient(150deg,#fff0fa_0%,#ffffff_50%,#faecff_100%)] font-[Roboto,sans-serif]">
          <SiteHeader />
          <AdminPage />
        </div>
        <ScrollBar />
      </div>
      <Taskbar />
    </div>
  );
}
